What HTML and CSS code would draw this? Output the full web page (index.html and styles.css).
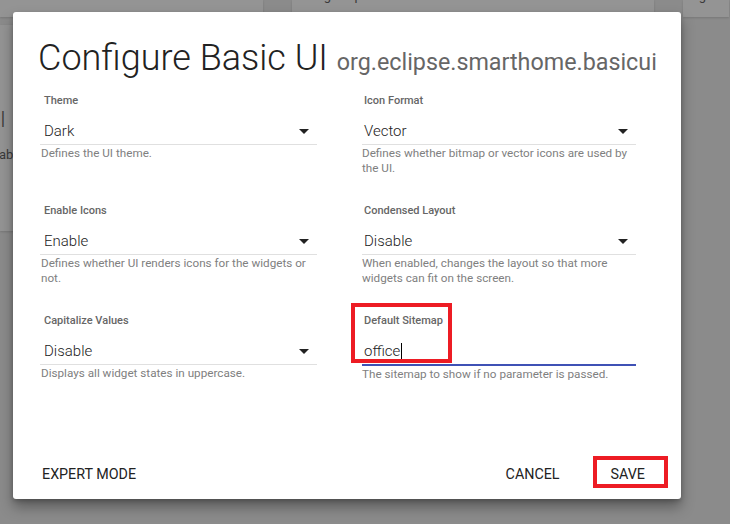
FILE: index.html
```html
<!DOCTYPE html>
<html>
<head>
<meta charset="utf-8">
<link rel="stylesheet" href="styles.css">
</head>
<body>
<div class="page">
  <div class="cards-top">
    <div class="card c1"><span class="card-txt">smarthome.basicui</span></div>
    <div class="card c2"><span class="card-txt">org.eclipse.smarthome.basicui</span></div>
    <div class="card c3"><span class="card-txt">org.ecl</span></div>
  </div>
  <div class="cards-mid">
    <div class="card c4"><span class="big">I</span><span class="small">ab</span></div>
  </div>
</div>

<div class="dialog">
  <h1 class="title">Configure Basic UI <span class="sub">org.eclipse.smarthome.basicui</span></h1>
  <div class="form">
    <div class="field">
      <div class="label">Theme</div>
      <div class="select"><span>Dark</span><i class="arrow"></i></div>
      <div class="help">Defines the UI theme.</div>
    </div>
    <div class="field col2">
      <div class="label">Icon Format</div>
      <div class="select"><span>Vector</span><i class="arrow"></i></div>
      <div class="help">Defines whether bitmap or vector icons are used by the UI.</div>
    </div>
    <div class="field">
      <div class="label">Enable Icons</div>
      <div class="select"><span>Enable</span><i class="arrow"></i></div>
      <div class="help">Defines whether UI renders icons for the widgets or not.</div>
    </div>
    <div class="field col2">
      <div class="label">Condensed Layout</div>
      <div class="select"><span>Disable</span><i class="arrow"></i></div>
      <div class="help">When enabled, changes the layout so that more widgets can fit on the screen.</div>
    </div>
    <div class="field">
      <div class="label">Capitalize Values</div>
      <div class="select"><span>Disable</span><i class="arrow"></i></div>
      <div class="help">Displays all widget states in uppercase.</div>
    </div>
    <div class="field col2">
      <div class="label">Default Sitemap</div>
      <div class="select focused"><span>office</span><i class="caret"></i></div>
      <div class="help">The sitemap to show if no parameter is passed.</div>
      <div class="mark mark-sitemap"></div>
    </div>
  </div>
  <div class="actions">
    <button class="btn">EXPERT MODE</button>
    <div class="right">
      <button class="btn">CANCEL</button>
      <button class="btn save">SAVE<span class="mark mark-save"></span></button>
    </div>
  </div>
</div>
</body>
</html>
```

FILE: styles.css
```css
* { box-sizing: border-box; }
html, body { margin: 0; padding: 0; }
body {
  width: 730px;
  height: 524px;
  overflow: hidden;
  background: #8b8b8b;
  font-family: Roboto, "Liberation Sans", sans-serif;
  position: relative;
}
.page { position: relative; width: 730px; height: 524px; }
.cards-top {
  display: grid;
  grid-template-columns: 263px 362px 46px;
  column-gap: 29px;
  height: 17px;
}
.card {
  background: #949494;
  position: relative;
  overflow: hidden;
  box-shadow: 0 1px 2px rgba(0,0,0,0.15);
}
.card-txt {
  position: absolute;
  top: -12px;
  left: 20px;
  font-size: 13px;
  color: #3a3a3a;
}
.c3 .card-txt { left: 4px; }
.cards-mid {
  margin-top: 8px;
  width: 20px;
  height: 206px;
  display: flex;
}
.c4 { width: 20px; height: 206px; }
.c4 .big { position: absolute; left: 0; top: 82px; font-size: 22px; line-height: 26px; color: #3a3a3a; font-weight: 300; }
.c4 .small { position: absolute; left: -1px; top: 122px; font-size: 13px; color: #3a3a3a; }

.dialog {
  position: absolute;
  left: 13px;
  top: 12px;
  width: 668px;
  height: 487px;
  background: #fff;
  border-radius: 3px;
  box-shadow: 0 8px 14px rgba(0,0,0,0.35), 0 2px 4px rgba(0,0,0,0.2);
  padding: 26px 45px 0 27px;
  display: flex;
  flex-direction: column;
}
.title {
  margin: 0 0 12px -2px;
  font-family: "Roboto Light", Roboto, sans-serif;
  font-weight: 300;
  font-size: 36px;
  line-height: 40px;
  color: #222;
  white-space: nowrap;
}
.sub {
  font-family: Roboto, sans-serif;
  font-weight: 400;
  font-size: 23.3px;
  color: #666;
}
.form {
  display: grid;
  grid-template-columns: 277px 274px;
  column-gap: 45px;
  grid-auto-rows: 110px;
}
.field { position: relative; }
.label {
  font-size: 11px;
  line-height: 14px;
  font-weight: 500;
  color: #666;
  padding-left: 4px;
}
.col2 .label, .col2 .select { padding-left: 2px; }
.select {
  margin-top: 10px;
  height: 27px;
  line-height: 26px;
  border-bottom: 1px solid #e0e0e0;
  font-family: "Roboto Light", Roboto, sans-serif;
  font-size: 15px;
  font-weight: 300;
  color: #222;
  padding-left: 4px;
  display: flex;
  align-items: center;
  position: relative;
}
.select.focused {
  border-bottom: 2px solid #3f51b5;
  height: 28px;
}
.arrow {
  position: absolute;
  right: 8px;
  top: 11px;
  width: 0;
  height: 0;
  border-left: 5px solid transparent;
  border-right: 5px solid transparent;
  border-top: 5px solid #222;
}
.caret {
  display: inline-block;
  width: 1px;
  height: 17px;
  background: #000;
  margin-left: 1px;
}
.help {
  margin-top: 1px;
  font-size: 11.7px;
  line-height: 15px;
  color: #808080;
  padding-left: 1px;
}
.col2 .help { padding-left: 0; }
.mark {
  position: absolute;
  border: 4px solid #ed1c24;
  pointer-events: none;
}
.mark-sitemap {
  left: -11px;
  top: -11px;
  width: 101px;
  height: 60px;
}
.actions {
  margin-top: auto;
  margin-bottom: 7px;
  margin-left: -6px;
  margin-right: -32px;
  height: 36px;
  display: flex;
  justify-content: space-between;
  align-items: center;
}
.right { display: flex; align-items: center; gap: 26px; }
.btn {
  font-family: Roboto, "Liberation Sans", sans-serif;
  background: none;
  border: 0;
  padding: 0 8px;
  height: 36px;
  font-size: 14.3px;
  font-weight: 400;
  color: #222;
  position: relative;
  letter-spacing: 0;
}
.save { padding: 0 23px 0 17px; }
.mark-save {
  left: -1px;
  top: 0;
  width: 75px;
  height: 32px;
}
```
